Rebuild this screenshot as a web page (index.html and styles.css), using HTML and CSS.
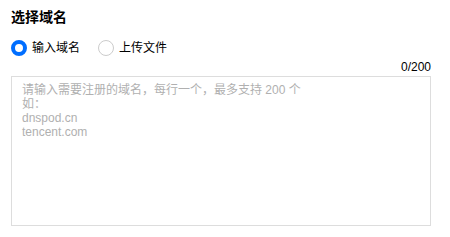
FILE: index.html
```html
<!DOCTYPE html>
<html lang="zh-CN">
<head>
    <meta charset="UTF-8">
    <title>选择域名</title>
    <link rel="stylesheet" href="styles.css">
</head>
<body>
    <div class="panel">
        <h3 class="panel-title">选择域名</h3>

        <div class="radio-group">
            <label class="radio checked">
                <span class="radio-dot"></span>
                <span>输入域名</span>
            </label>
            <label class="radio">
                <span class="radio-dot"></span>
                <span>上传文件</span>
            </label>
        </div>

        <div class="counter">0/200</div>
        <textarea class="domain-input" placeholder="请输入需要注册的域名，每行一个，最多支持 200 个&#10;如：&#10;dnspod.cn&#10;tencent.com"></textarea>
    </div>
</body>
</html>
```

FILE: styles.css
```css
/* General */
body {
    margin: 0;
    font-family: "Liberation Sans", "Noto Sans CJK SC", sans-serif;
    font-size: 12px;
    color: #000;
    background: #fff;
}

.panel {
    padding: 10px 19px 0 11px;
}

.panel-title {
    margin: 0;
    font-size: 14px;
    font-weight: bold;
    line-height: 14px;
}

/* Radios */
.radio-group {
    display: flex;
    gap: 18px;
    margin-top: 16px;
}
.radio {
    display: flex;
    align-items: center;
    gap: 5px;
    cursor: pointer;
    line-height: 16px;
}
.radio-dot {
    width: 16px;
    height: 16px;
    box-sizing: border-box;
    border: 1px solid #ccc;
    border-radius: 50%;
    background: #fff;
}
.radio.checked .radio-dot {
    border: 4px solid #006eff;
}

/* Textarea */
.counter {
    text-align: right;
    margin-top: 4px;
    line-height: 14px;
    color: #000;
}
.domain-input {
    display: block;
    width: 100%;
    height: 150px;
    box-sizing: border-box;
    margin-top: 2px;
    padding: 6px 10px;
    border: 1px solid #ddd;
    font-family: inherit;
    font-size: 12px;
    line-height: 14px;
    resize: none;
    outline: none;
}
.domain-input::placeholder {
    color: #b0b0b0;
}
```
